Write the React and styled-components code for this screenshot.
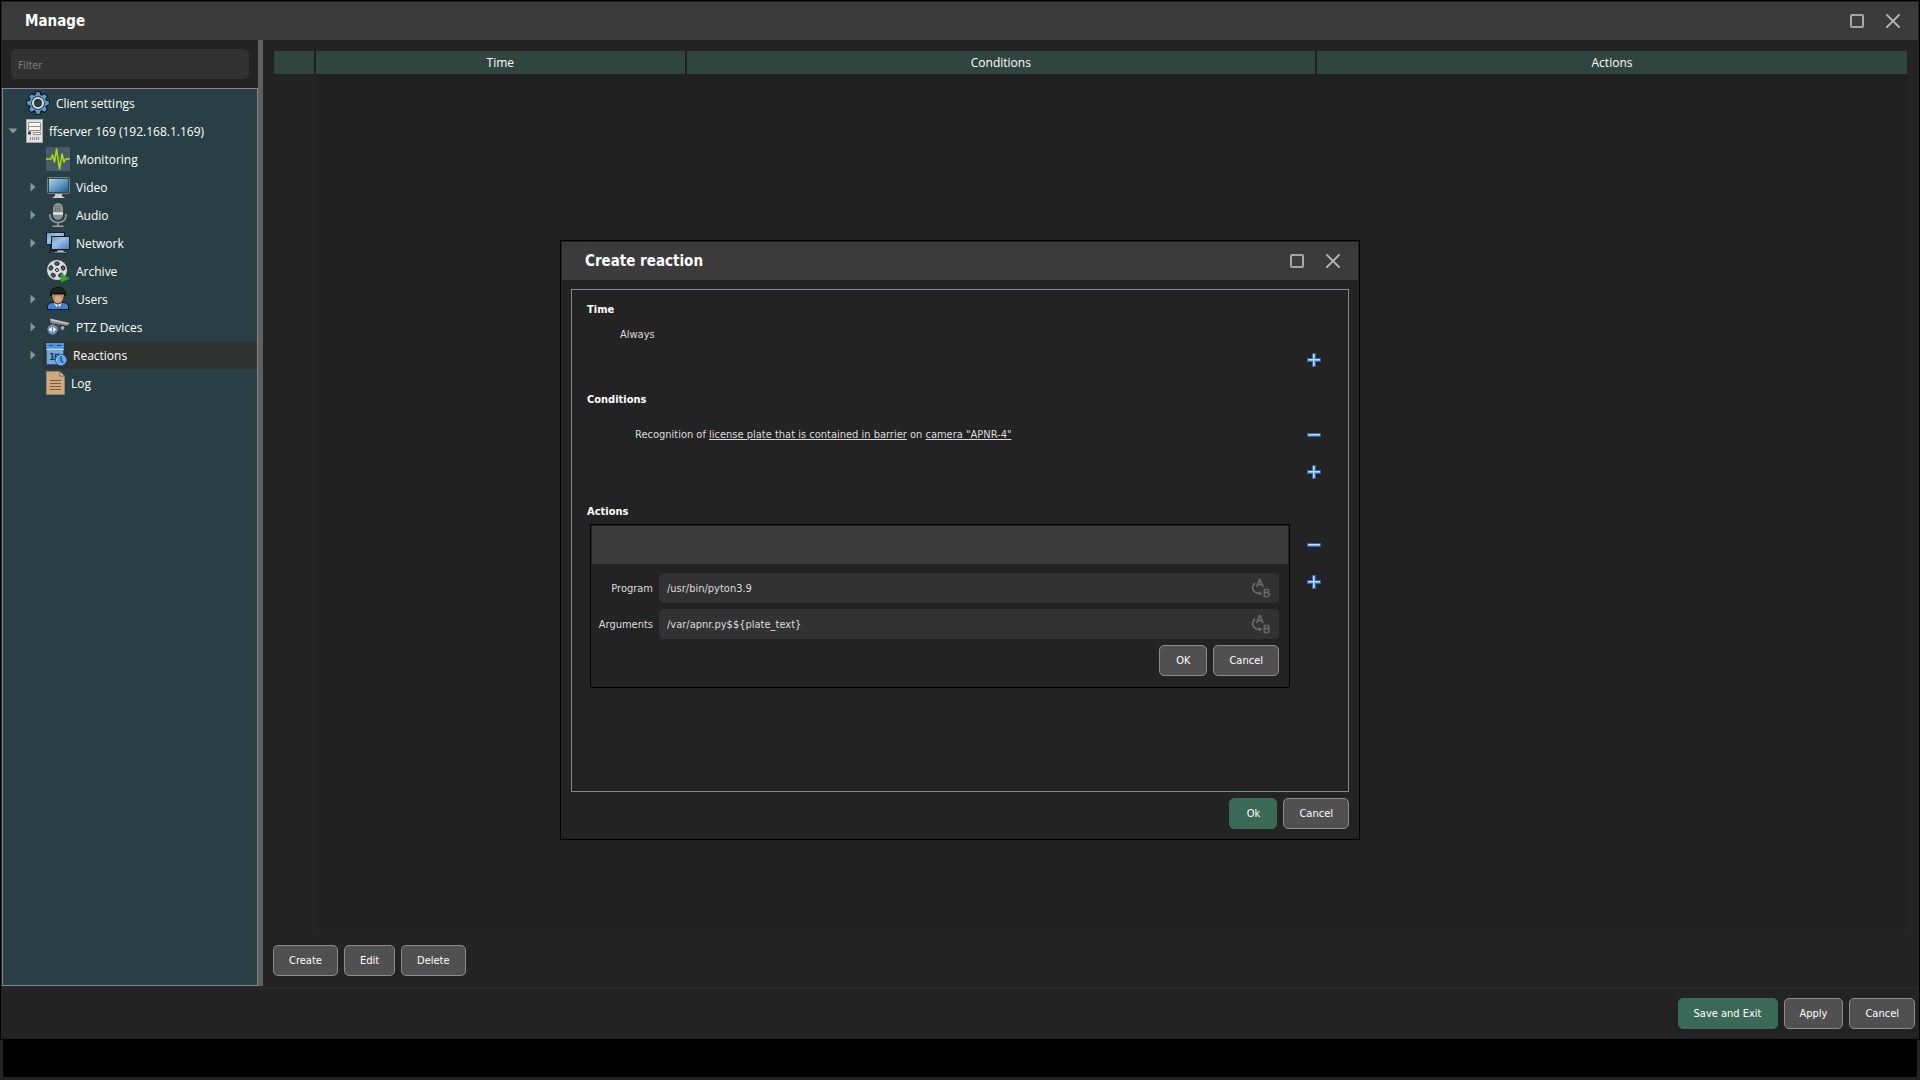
import React from 'react';
import styled, { createGlobalStyle } from 'styled-components';

const uiFont = `'Open Sans', 'Noto Sans', sans-serif`;
const formFont = `'DejaVu Sans Condensed', 'DejaVu Sans', sans-serif`;

const GlobalStyle = createGlobalStyle`
  * {
    box-sizing: border-box;
  }

  body {
    background: #000;
    color: #fff;
    font-family: ${formFont};
    font-size: 11px;
    line-height: 20px;
    margin: 0;
  }

  button, input {
    font: inherit;
  }
`;

const Screen = styled.div`
  display: flex;
  flex-direction: column;
  min-height: 100vh;
`;

const Window = styled.main`
  background: #232323;
  border: 1px solid #000;
  display: flex;
  flex: 1;
  flex-direction: column;
  padding: 1px;
`;

const Taskbar = styled.div`
  background: #000;
  border: solid #232323;
  border-width: 0 3px 3px;
  height: 40px;
`;

const TitleBar = styled.header`
  align-items: center;
  background: #3b3b3b;
  display: flex;
  gap: 14px;
  height: 38px;
  padding: 0 14px 0 23px;
`;

const Title = styled.h1`
  flex: 1;
  font-size: 15px;
  font-weight: bold;
  margin: 0;
`;

const WindowButton = styled.button`
  align-items: center;
  background: none;
  border: 0;
  display: flex;
  height: 22px;
  justify-content: center;
  padding: 0;
  width: 22px;
`;

const Workspace = styled.div`
  display: flex;
  flex: 1;
`;

const Sidebar = styled.aside`
  border-right: 5px solid #5f5f5f;
  display: flex;
  flex-direction: column;
  width: 261px;
`;

const Filter = styled.input`
  background: #323232;
  border: 0;
  border-radius: 5px;
  color: #ddd;
  height: 30px;
  margin: 9px;
  padding: 2px 7px 0;

  &::placeholder {
    color: #7d7d7d;
    opacity: 1;
  }
`;

const Tree = styled.ul`
  background: #284045;
  border: 1px solid #84868e;
  flex: 1;
  font-family: ${uiFont};
  font-size: 12px;
  list-style: none;
  margin: 0;
  padding: 0;
`;

const TreeRow = styled.li`
  display: flex;
  height: 28px;
  padding-left: ${props => props.$level * 20}px;
`;

const Expander = styled.span`
  align-items: center;
  display: flex;
  justify-content: center;
  width: 20px;
`;

const TreeItem = styled.a`
  align-items: center;
  background: ${props => (props.$selected ? '#2f3331' : 'none')};
  color: #fff;
  display: flex;
  flex: 1;
  gap: 6px;
  padding-left: 3px;
  text-decoration: none;
`;

const TreeLabel = styled.span`
  padding-top: 2px;
`;

const Content = styled.section`
  display: flex;
  flex: 1;
  flex-direction: column;
  padding: 11px 11px 10px 10px;
`;

const TableArea = styled.div`
  display: flex;
  flex: 1;
  padding-left: 1px;
`;

const Table = styled.table`
  border-collapse: separate;
  border-spacing: 0;
  flex: 1;
  font-family: ${uiFont};
  font-size: 12px;
  table-layout: fixed;
`;

const HeadCell = styled.th`
  background: #30453e;
  border-right: 2px solid #212121;
  font-weight: normal;
  height: 23px;
  padding: 0;
  width: ${props => props.$width};

  &:last-child {
    border-right: 0;
  }
`;

const BodyCell = styled.td`
  background: ${props => (props.$index ? '#232323' : '#212121')};
  padding: 0;
`;

const ButtonRow = styled.div`
  display: flex;
  gap: 6px;
  justify-content: ${props => (props.$end ? 'flex-end' : 'flex-start')};
`;

const TableActions = styled(ButtonRow)`
  padding-top: 15px;
`;

const Button = styled.button`
  background: ${props => (props.$primary ? '#3a6958' : '#505050')};
  border: 1px solid ${props => (props.$primary ? '#3a6958' : '#8c8c8c')};
  border-radius: 5px;
  color: #fff;
  height: 31px;
  min-width: 48px;
  padding: 1px 15px 0;
`;

const Footer = styled.footer`
  border-top: 3px solid #272727;
  padding: 9px 3px 9px;
`;

const Overlay = styled.div`
  align-items: center;
  display: flex;
  inset: 0;
  justify-content: center;
  position: fixed;
`;

const Dialog = styled.div`
  background: #232323;
  border: 1px solid #000;
  padding: 1px;
  width: 800px;
`;

const DialogBody = styled.div`
  padding: 9px;
`;

const Frame = styled.div`
  border: 1px solid #84868e;
  height: 503px;
  margin-bottom: 6px;
  padding: 10px 20px 0 15px;
`;

const Section = styled.section`
  margin-bottom: 16px;
`;

const SectionTitle = styled.h2`
  font-size: 11px;
  font-weight: bold;
  line-height: 20px;
  margin: 0;
`;

const TimeValue = styled.p`
  color: #ddd;
  margin: 5px 0 1px;
  padding-left: 33px;
`;

const ConditionRow = styled.div`
  align-items: center;
  color: #ddd;
  display: flex;
  height: 30px;
  justify-content: space-between;
  margin: 10px 0 8px;
  padding-left: 48px;
`;

const ConditionLink = styled.a`
  color: #ddd;
`;

const AddRow = styled.div`
  display: flex;
  justify-content: flex-end;
`;

const IconButton = styled.button`
  align-items: center;
  background: none;
  border: 0;
  display: flex;
  height: 28px;
  justify-content: center;
  padding: 0;
  width: 28px;
`;

const ActionRow = styled.div`
  display: flex;
  gap: 10px;
  padding: 2px 0 0 3px;
`;

const ActionControls = styled.div`
  display: flex;
  flex-direction: column;
  gap: 9px;
  padding-top: 7px;
`;

const ActionPanel = styled.form`
  border: 1px solid #000;
  flex: 1;
  padding: 1px;
`;

const PanelHeader = styled.div`
  background: #3b3b3b;
  height: 38px;
`;

const PanelBody = styled.div`
  padding: 9px 9px 10px;
`;

const Fields = styled.div`
  align-items: center;
  display: grid;
  gap: 6px;
  grid-template-columns: 52px 1fr;
  margin-bottom: 6px;
`;

const Label = styled.label`
  color: #ddd;
  display: flex;
  justify-content: flex-end;
  padding-top: 2px;
`;

const Field = styled.div`
  align-items: center;
  background: #323232;
  border-radius: 5px;
  display: flex;
  height: 30px;
  padding: 0 6px 0 8px;
`;

const FieldInput = styled.input`
  background: none;
  border: 0;
  color: #ddd;
  flex: 1;
  padding: 2px 0 0;
`;

const FieldButton = styled(IconButton)`
  width: 22px;
`;

const MaximizeIcon = () => (
  <svg width="14" height="14" viewBox="0 0 14 14">
    <rect x="1" y="1" width="12" height="12" rx="1" fill="none" stroke="#a6a6a6" strokeWidth="2" />
  </svg>
);

const CloseIcon = () => (
  <svg width="14" height="14" viewBox="0 0 14 14">
    <path d="M1 1 13 13M13 1 1 13" stroke="#b4b4b4" strokeWidth="1.800" strokeLinecap="round" />
  </svg>
);

const PlusIcon = () => (
  <svg width="14" height="14" viewBox="0 0 14 14" shapeRendering="crispEdges">
    <path d="M5 0h4v5h5v4H9v5H5V9H0V5h5z" fill="#2f63ad" />
    <path d="M6 1h2v5h5v2H8v5H6V8H1V6h5z" fill="#7fb0ea" />
    <path d="M6 1h1v5h6v1H7v6H6V7H1V6h5z" fill="#c3dcf8" />
  </svg>
);

const MinusIcon = () => (
  <svg width="14" height="4" viewBox="0 0 14 4" shapeRendering="crispEdges">
    <path d="M0 0h14v4H0z" fill="#2f63ad" />
    <path d="M1 1h12v2H1z" fill="#7fb0ea" />
    <path d="M1 1h12v1H1z" fill="#c3dcf8" />
  </svg>
);

const MacroIcon = () => (
  <svg width="22" height="26" viewBox="0 0 22 26" fill="#6a6d6b" stroke="#6a6d6b">
    <g fontFamily="Liberation Sans" fontSize="11" strokeWidth="0.500">
      <text x="5" y="12">A</text>
      <text x="12" y="22">B</text>
    </g>
    <path d="M4 8C0 11 1 18 9 18.500" fill="none" strokeWidth="1.600" />
    <path d="M8 16.500 11 18.500 8 20z" strokeWidth="0.500" />
  </svg>
);

const Collapsed = () => (
  <svg width="6" height="10" viewBox="0 0 6 10">
    <path d="M0.500 0.500 5.500 5 0.500 9.500z" fill="#8a9395" />
  </svg>
);

const Expanded = () => (
  <svg width="10" height="6" viewBox="0 0 10 6">
    <path d="M0.500 0.500h9L5 5.500z" fill="#8a9395" />
  </svg>
);

const gearAngles = [0, 45, 90, 135, 180, 225, 270, 315];

const GearIcon = () => (
  <svg width="24" height="24" viewBox="0 0 24 24">
    <g fill="#5b9bd0" stroke="#101a20" strokeWidth="1.400">
      {gearAngles.map(angle => (
        <path key={angle} d="M9 5 10 0.800h4L15 5z" transform={`rotate(${angle} 12 12)`} />
      ))}
      <circle cx="12" cy="12" r="9" />
    </g>
    <g fill="#5b9bd0">
      {gearAngles.map(angle => (
        <path key={angle} d="M9.500 5 10.400 1.200h3.200L14.500 5z" transform={`rotate(${angle} 12 12)`} />
      ))}
    </g>
    <circle cx="12" cy="12" r="5" fill="#284045" stroke="#101a20" strokeWidth="3.600" />
    <circle cx="12" cy="12" r="5" fill="none" stroke="#dcdcdc" strokeWidth="2.200" />
  </svg>
);

const ServerIcon = () => (
  <svg width="17" height="24" viewBox="0 0 17 24">
    <rect x="0.500" y="0.500" width="16" height="23" fill="#e2e2e0" stroke="#a7a7a5" />
    <g fill="#f4f4f2" stroke="#8f8f8d">
      <path d="M2.500 3.500h12v4h-12zM2.500 7.500h12v4h-12z" />
      <path d="M7.500 13.500h7v2h-7z" />
    </g>
    <path d="M2 12.500h3v3H2z" fill="#444" />
    <path d="M4.500 18v3M6.500 18v3M8.500 18v3M10.500 18v3M12.500 18v3" stroke="#8b8b89" />
  </svg>
);

const MonitoringIcon = () => (
  <svg width="24" height="24" viewBox="0 0 24 24">
    <rect width="24" height="24" rx="1" fill="#4a5c69" />
    <path
      d="M0 12h5l1.500-4 2 7L10.500 2l3 20L16 7l2 8 1.500-3H24"
      fill="none"
      stroke="#a9e500"
      strokeWidth="1.500"
      strokeLinejoin="round"
    />
  </svg>
);

const VideoIcon = () => (
  <svg width="24" height="24" viewBox="0 0 24 24">
    <linearGradient id="video" x1="0" y1="0" x2="1" y2="1">
      <stop offset="0" stopColor="#b5d3e8" />
      <stop offset="0.500" stopColor="#5e9cc4" />
      <stop offset="1" stopColor="#1d5f92" />
    </linearGradient>
    <rect x="1.500" y="2.500" width="22" height="16" rx="1" fill="#3a4043" stroke="#777f84" />
    <rect x="3" y="4" width="19" height="13" fill="url(#video)" />
    <path d="M9 19h7v2l3 2H6l3-2z" fill="#c9d0d3" />
  </svg>
);

const AudioIcon = () => (
  <svg width="24" height="24" viewBox="0 0 24 24">
    <rect x="7" y="0" width="10" height="17" rx="5" fill="#8d8f8f" />
    <path d="M7 9.500h10v2H7z" fill="#f0f0f0" />
    <path d="M9 3.500h6M9 5.500h6M9 7.500h6" stroke="#555857" strokeDasharray="1 1" />
    <path d="M4 11v2a8 6.500 0 0 0 16 0v-2M12 19.500v4M6.500 23.200h11" fill="none" stroke="#9b9d9d" strokeWidth="1.600" />
  </svg>
);

const NetworkIcon = () => (
  <svg width="24" height="24" viewBox="0 0 24 24">
    <linearGradient id="network" x1="0" y1="0" x2="1" y2="1">
      <stop offset="0" stopColor="#5f97cf" />
      <stop offset="0.400" stopColor="#9cc2ea" />
      <stop offset="1" stopColor="#437bb8" />
    </linearGradient>
    <rect x="0.500" y="1.500" width="18" height="12" fill="url(#network)" stroke="#152029" />
    <path d="M4.500 14v7M3 19.500h7M3 21.500h2" stroke="#15191c" />
    <rect x="5.500" y="5.500" width="18" height="13" fill="url(#network)" stroke="#152029" />
    <path d="M11 19h7v1.500h3v1.500H8v-1.500h3z" fill="#b3b8ba" stroke="#15191c" strokeWidth="0.700" />
  </svg>
);

const ArchiveIcon = () => (
  <svg width="24" height="24" viewBox="0 0 24 24">
    <circle cx="11" cy="11" r="10.500" fill="#d9dadb" stroke="#202a2d" strokeWidth="0.800" />
    <g fill="#3f5a68" stroke="#11191c" strokeWidth="0.800">
      {[0, 72, 144, 216, 288].map(angle => (
        <ellipse key={angle} cx="11" cy="4.600" rx="2.300" ry="1.800" transform={`rotate(${angle} 11 11)`} />
      ))}
    </g>
    <circle cx="11" cy="11" r="1.500" fill="#eee" stroke="#222" />
    <path d="M15 14.500 24 19.500 15 23.500z" fill="#36a52b" />
  </svg>
);

const UserIcon = () => (
  <svg width="24" height="24" viewBox="0 0 24 24">
    <path d="M1.500 22.500v-3q0-3.500 5-4l5.500 2 5.500-2q5 0.500 5 4v3z" fill="#4582cf" stroke="#0d141c" />
    <path d="M8 16 10.500 20l1.500-2 1.500 2L16 16z" fill="#f2f5fa" />
    <path d="M5.500 7c0 6 3 10 6.500 10s6.500-4 6.500-10z" fill="#b98c64" stroke="#241c17" />
    <ellipse cx="12" cy="12" rx="3.500" ry="3.500" fill="#dcb48b" opacity="0.700" />
    <path d="M4.500 9C4 3 7 0.500 12 0.500S20 3 19.500 9q-1-2-2-2.500h-11q-1 0.500-2 2.500z" fill="#1f2224" stroke="#0b0d0e" />
  </svg>
);

const PtzIcon = () => (
  <svg width="24" height="24" viewBox="0 0 24 24">
    <path d="M4.500 3.500 23.500 8l-2.500 3.500L3.500 8.500z" fill="#85898b" stroke="#262d30" />
    <path d="M4.500 3.500 23.500 8l-1 1.500L4 5.500z" fill="#c2c5c6" />
    <path d="M10 10 18 11.500l-4 4h-3z" fill="#4b5154" />
    <circle cx="16.500" cy="13" r="2.500" fill="#a4a8aa" stroke="#262d30" />
    <circle cx="6.500" cy="14.500" r="4.500" fill="#5586b8" stroke="#86aed4" />
    <path d="M5.800 11.500v6L2.800 14.500zM7.200 11.500v6l3-3z" fill="#fff" />
  </svg>
);

const ReactionsIcon = () => (
  <svg width="21" height="24" viewBox="0 0 21 24">
    <path d="M0.500 0.500h17v21h-17z" fill="#78a8cd" stroke="#245b8e" />
    <path d="M0 0h18v5H0z" fill="#4a93de" />
    <path d="M3 2.500h4M11 2.500h4" stroke="#1c4d82" />
    <path d="M0 6.500h18" stroke="#b8d6ee" />
    <text x="3" y="17" fontFamily="DejaVu Sans" fontWeight="bold" fontSize="9" fill="#173c5c">1</text>
    <path d="M9.500 16.500v-5h4" fill="none" stroke="#173c5c" strokeWidth="1.500" />
    <circle cx="15" cy="17" r="5.500" fill="#5aa3e6" stroke="#1e5c9c" />
    <circle cx="15" cy="17" r="4.500" fill="none" stroke="#a5cef2" strokeWidth="0.800" />
    <path d="M15 13v4l2 3" fill="none" stroke="#143e6b" strokeWidth="1.200" />
  </svg>
);

const LogIcon = () => (
  <svg width="19" height="24" viewBox="0 0 19 24">
    <path d="M0.500 0.500H14L18.500 5v18.500H0.500z" fill="#d1a97a" stroke="#8f857a" />
    <path d="M14 0.500V5h4.500z" fill="#efe2cf" stroke="#4d4338" strokeWidth="0.800" />
    <path d="M4 9.500h11M4 12.500h11M4 15.500h11M4 18.500h11" stroke="#7c5f40" />
  </svg>
);

const treeItems = [
  { label: 'Client settings', icon: GearIcon, level: 0 },
  { label: 'ffserver 169 (192.168.1.169)', icon: ServerIcon, level: 0, expander: Expanded },
  { label: 'Monitoring', icon: MonitoringIcon, level: 1 },
  { label: 'Video', icon: VideoIcon, level: 1, expander: Collapsed },
  { label: 'Audio', icon: AudioIcon, level: 1, expander: Collapsed },
  { label: 'Network', icon: NetworkIcon, level: 1, expander: Collapsed },
  { label: 'Archive', icon: ArchiveIcon, level: 1 },
  { label: 'Users', icon: UserIcon, level: 1, expander: Collapsed },
  { label: 'PTZ Devices', icon: PtzIcon, level: 1, expander: Collapsed },
  { label: 'Reactions', icon: ReactionsIcon, level: 1, expander: Collapsed, selected: true },
  { label: 'Log', icon: LogIcon, level: 1 },
];

const WindowHeader = ({ title }) => (
  <TitleBar>
    <Title>{title}</Title>
    <WindowButton type="button" aria-label="Maximize"><MaximizeIcon /></WindowButton>
    <WindowButton type="button" aria-label="Close"><CloseIcon /></WindowButton>
  </TitleBar>
);

const NavigationTree = () => (
  <Tree>
    {treeItems.map(({ label, icon: Icon, level, expander: Arrow, selected }) => (
      <TreeRow key={label} $level={level}>
        <Expander>{Arrow && <Arrow />}</Expander>
        <TreeItem href="#" $selected={selected}>
          <Icon />
          <TreeLabel>{label}</TreeLabel>
        </TreeItem>
      </TreeRow>
    ))}
  </Tree>
);

const ReactionsTable = () => (
  <TableArea>
    <Table>
      <thead>
        <tr>
          <HeadCell $width="42px" aria-label="Number" />
          <HeadCell $width="22.7%">Time</HeadCell>
          <HeadCell $width="38.6%">Conditions</HeadCell>
          <HeadCell>Actions</HeadCell>
        </tr>
      </thead>
      <tbody>
        <tr>
          <BodyCell $index />
          <BodyCell colSpan="3" />
        </tr>
      </tbody>
    </Table>
  </TableArea>
);

const MacroField = ({ id, label, value }) => (
  <>
    <Label htmlFor={id}>{label}</Label>
    <Field>
      <FieldInput id={id} type="text" defaultValue={value} />
      <FieldButton type="button" aria-label="Insert macro"><MacroIcon /></FieldButton>
    </Field>
  </>
);

const AddButton = () => (
  <IconButton type="button" aria-label="Add"><PlusIcon /></IconButton>
);

const RemoveButton = () => (
  <IconButton type="button" aria-label="Remove"><MinusIcon /></IconButton>
);

const ReactionDialog = () => (
  <Overlay>
    <Dialog role="dialog" aria-label="Create reaction">
      <WindowHeader title="Create reaction" />
      <DialogBody>
        <Frame>
          <Section>
            <SectionTitle>Time</SectionTitle>
            <TimeValue>Always</TimeValue>
            <AddRow><AddButton /></AddRow>
          </Section>
          <Section>
            <SectionTitle>Conditions</SectionTitle>
            <ConditionRow>
              <span>
                Recognition of <ConditionLink href="#">license plate that is contained in barrier</ConditionLink>
                {' '}on <ConditionLink href="#">camera "APNR-4"</ConditionLink>
              </span>
              <RemoveButton />
            </ConditionRow>
            <AddRow><AddButton /></AddRow>
          </Section>
          <Section>
            <SectionTitle>Actions</SectionTitle>
            <ActionRow>
              <ActionPanel>
                <PanelHeader />
                <PanelBody>
                  <Fields>
                    <MacroField id="program" label="Program" value="/usr/bin/pyton3.9" />
                    <MacroField id="arguments" label="Arguments" value="/var/apnr.py$${plate_text}" />
                  </Fields>
                  <ButtonRow $end>
                    <Button type="button">OK</Button>
                    <Button type="button">Cancel</Button>
                  </ButtonRow>
                </PanelBody>
              </ActionPanel>
              <ActionControls>
                <RemoveButton />
                <AddButton />
              </ActionControls>
            </ActionRow>
          </Section>
        </Frame>
        <ButtonRow $end>
          <Button type="button" $primary>Ok</Button>
          <Button type="button">Cancel</Button>
        </ButtonRow>
      </DialogBody>
    </Dialog>
  </Overlay>
);

export default function App() {
  return (
    <Screen>
      <GlobalStyle />
      <Window>
        <WindowHeader title="Manage" />
        <Workspace>
          <Sidebar>
            <Filter type="text" placeholder="Filter" aria-label="Filter" />
            <NavigationTree />
          </Sidebar>
          <Content>
            <ReactionsTable />
            <TableActions>
              <Button type="button">Create</Button>
              <Button type="button">Edit</Button>
              <Button type="button">Delete</Button>
            </TableActions>
          </Content>
        </Workspace>
        <Footer>
          <ButtonRow $end>
            <Button type="button" $primary>Save and Exit</Button>
            <Button type="button">Apply</Button>
            <Button type="button">Cancel</Button>
          </ButtonRow>
        </Footer>
      </Window>
      <Taskbar />
      <ReactionDialog />
    </Screen>
  );
}
